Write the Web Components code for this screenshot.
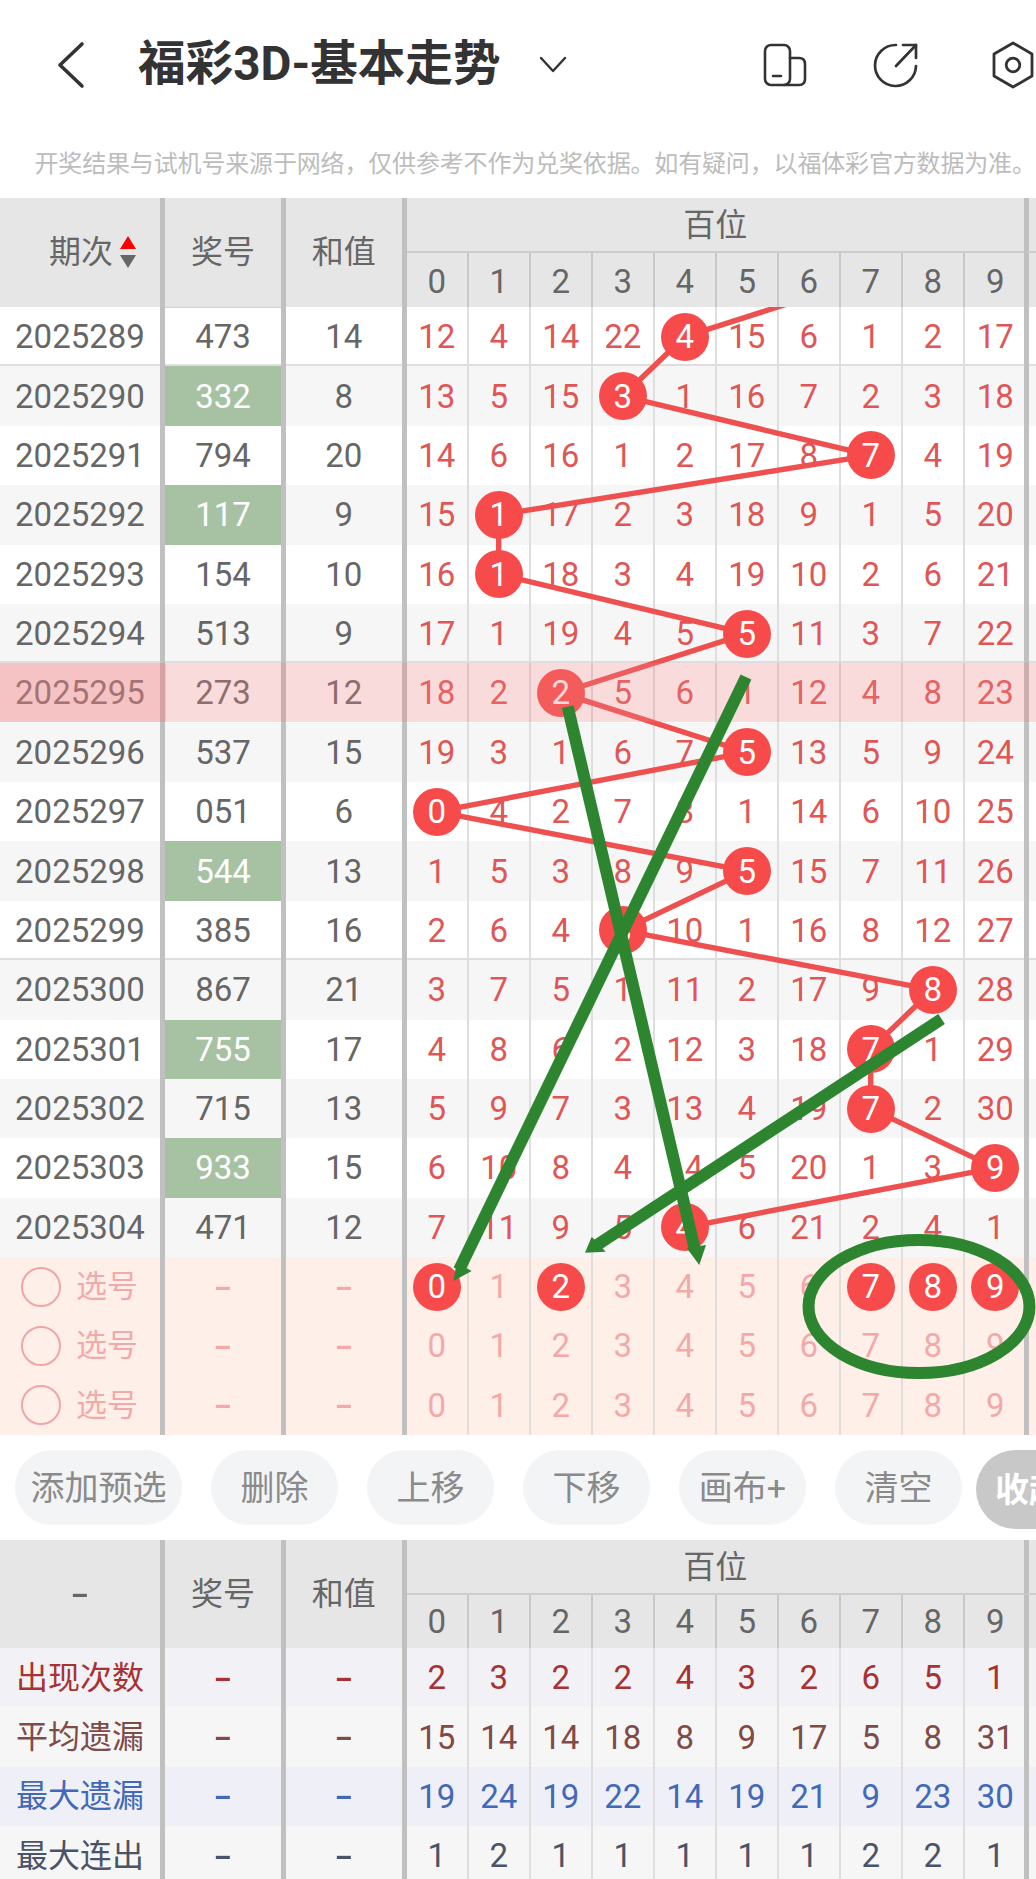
<!DOCTYPE html>
<html lang="zh-CN">
<head>
<meta charset="utf-8">
<title>福彩3D-基本走势</title>
<style>
  html, body { margin: 0; background: #fff; }
  body { width: 1036px; height: 1879px; overflow: hidden; font-family: Roboto, "Noto Sans CJK SC", sans-serif; }
  trend-table, action-bar, stat-table, top-bar, notice-bar { width: 1036px; }
</style>
</head>
<body>
<top-bar title-text="福彩3D-基本走势"></top-bar>
<notice-bar>开奖结果与试机号来源于网络，仅供参考不作为兑奖依据。如有疑问，以福体彩官方数据为准。</notice-bar>
<trend-table></trend-table>
<action-bar>
  <action-pill>添加预选</action-pill>
  <action-pill>删除</action-pill>
  <action-pill>上移</action-pill>
  <action-pill>下移</action-pill>
  <action-pill>画布+</action-pill>
  <action-pill>清空</action-pill>
  <action-pill strong>收起</action-pill>
</action-bar>
<stat-table></stat-table>

<script>
const COLS = "165px 121px 120.7px repeat(9, 62px) 59px 1fr";
const FONT = 'Roboto, "Noto Sans CJK SC", sans-serif';
const ROW_H = 59.375;

// [期次, 奖号, 和值, 命中列, 遗漏]
const DRAWS = [
    ["2025289", "473", "14", 4, [12, 4, 14, 22, 4, 15, 6, 1, 2, 17]],
    ["2025290", "332", "8", 3, [13, 5, 15, 3, 1, 16, 7, 2, 3, 18]],
    ["2025291", "794", "20", 7, [14, 6, 16, 1, 2, 17, 8, 7, 4, 19]],
    ["2025292", "117", "9", 1, [15, 1, 17, 2, 3, 18, 9, 1, 5, 20]],
    ["2025293", "154", "10", 1, [16, 1, 18, 3, 4, 19, 10, 2, 6, 21]],
    ["2025294", "513", "9", 5, [17, 1, 19, 4, 5, 5, 11, 3, 7, 22]],
    ["2025295", "273", "12", 2, [18, 2, 2, 5, 6, 1, 12, 4, 8, 23]],
    ["2025296", "537", "15", 5, [19, 3, 1, 6, 7, 5, 13, 5, 9, 24]],
    ["2025297", "051", "6", 0, [0, 4, 2, 7, 8, 1, 14, 6, 10, 25]],
    ["2025298", "544", "13", 5, [1, 5, 3, 8, 9, 5, 15, 7, 11, 26]],
    ["2025299", "385", "16", 3, [2, 6, 4, 3, 10, 1, 16, 8, 12, 27]],
    ["2025300", "867", "21", 8, [3, 7, 5, 1, 11, 2, 17, 9, 8, 28]],
    ["2025301", "755", "17", 7, [4, 8, 6, 2, 12, 3, 18, 7, 1, 29]],
    ["2025302", "715", "13", 7, [5, 9, 7, 3, 13, 4, 19, 7, 2, 30]],
    ["2025303", "933", "15", 9, [6, 10, 8, 4, 14, 5, 20, 1, 3, 9]],
    ["2025304", "471", "12", 4, [7, 11, 9, 5, 4, 6, 21, 2, 4, 1]],
];
const GROUP_SUM = ["332", "117", "544", "755", "933"];

const STATS = [
    ["出现次数", "#a83232", "#f1f1f6", [2, 3, 2, 2, 4, 3, 2, 6, 5, 1]],
    ["平均遗漏", "#7f4a48", "#f6f6f6", [15, 14, 14, 18, 8, 9, 17, 5, 8, 31]],
    ["最大遗漏", "#4269b8", "#eff0f7", [19, 24, 19, 22, 14, 19, 21, 9, 23, 30]],
    ["最大连出", "#4a5468", "#f6f6f6", [1, 2, 1, 1, 1, 1, 1, 2, 2, 1]],
];

function colCenter(col) {
    return col === 9 ? 995.2 : 436.7 + 62 * col;
}

class TopBar extends HTMLElement {
    constructor() {
        super();
        this.attachShadow({ mode: "open" });
    }

    connectedCallback() {
        this.shadowRoot.innerHTML = `
      <style>
        :host { display: flex; align-items: center; height: 130px; color: #333; overflow: hidden; }
        svg { display: block; flex: none; fill: none; stroke: #333; stroke-linecap: round; stroke-linejoin: round; }
        .back { margin-left: 56px; }
        h1 { margin: 0 0 0 53px; font: 700 47.6px/1 ${FONT}; white-space: nowrap; }
        .arrow { margin-left: 38.7px; }
        .phone { margin-left: 196px; }
        .share { margin-left: 66px; }
        .gear { margin-left: 70px; }
      </style>
      <svg class="back" width="29" height="48" viewBox="0 0 29 48" stroke-width="3.6">
        <path d="M26 3 L4 24 L26 45"/>
      </svg>
      <h1>${this.getAttribute("title-text")}</h1>
      <svg class="arrow" width="28" height="18" viewBox="0 0 28 18" stroke-width="2.4">
        <path d="M2 2 L14 15 L26 2"/>
      </svg>
      <svg class="phone" width="44" height="44" viewBox="0 0 44 44" stroke-width="2.6">
        <rect x="2" y="2" width="25" height="40" rx="6"/>
        <path d="M27 15 H36 Q42 15 42 21 V36 Q42 42 36 42 H21"/>
        <path d="M10 33 H18"/>
      </svg>
      <svg class="share" width="48" height="46" viewBox="0 0 48 46" stroke-width="2.7">
        <path d="M23 3 A20.5 20.5 0 1 0 43 24"/>
        <path d="M23 24 L43 3"/>
        <path d="M30 3 H43 V16"/>
      </svg>
      <svg class="gear" width="44" height="48" viewBox="0 0 44 48" stroke-width="2.8">
        <path d="M22 2 L41 13 V35 L22 46 L3 35 V13 Z"/>
        <circle cx="22" cy="24" r="6.8"/>
      </svg>
    `;
    }
}

class NoticeBar extends HTMLElement {
    constructor() {
        super();
        this.attachShadow({ mode: "open" });
        this.shadowRoot.innerHTML = `
      <style>
        :host { display: flex; align-items: center; height: 68px; padding-left: 34.5px; box-sizing: border-box;
                overflow: hidden; white-space: nowrap; color: #bcbcbc; font: 24px/1 ${FONT}; letter-spacing: -.16px; }
      </style>
      <slot></slot>
    `;
    }
}

// 两张表共用的表头
class TrendHead extends HTMLElement {
    constructor() {
        super();
        this.attachShadow({ mode: "open" });
    }

    connectedCallback() {
        const sort = this.hasAttribute("sortable");
        const lastRow = sort ? 54 : 53;
        let digits = "";
        for (let i = 0; i < 10; i++) {
            digits += `<div class="d${i === 9 ? " last" : ""}" style="grid-row:2;grid-column:${i + 4}">${i}</div>`;
        }
        this.shadowRoot.innerHTML = `
      <style>
        :host { display: grid; grid-template-columns: ${COLS}; grid-template-rows: 55px ${lastRow}px; height: ${55 + lastRow}px;
                background: #e6e6e6; color: #666; font: 32px/1 ${FONT}; }
        div { display: flex; align-items: center; justify-content: center; box-sizing: border-box; }
        .tall { grid-row: 1 / 3; border-right: 5px solid #c0c0c0; padding-bottom: ${sort ? 2 : 0}px; }
        .first { justify-content: flex-start; padding-left: 49px; }
        .blank { justify-content: center; padding-left: 0; }
        .dash { display: inline-block; font-size: 42px; transform: scaleX(1.4); }
        .group { grid-row: 1; grid-column: 4 / 14; border-bottom: 2px solid #cdcdcd; }
        .d { border-right: 2px solid #c8c8c8; font-size: 33px; padding-top: ${sort ? 2 : 0}px; }
        .d.last { border-right: 0; padding-left: 2px; }
        .rest { grid-column: 14; border-left: 5px solid #c0c0c0; }
        .rest.top { grid-row: 1; border-bottom: 2px solid #cdcdcd; }
        .rest.bottom { grid-row: 2; }
        .sort { display: flex; flex-direction: column; gap: 6px; margin-left: 7px; }
        .sort i { display: block; width: 0; height: 0; border-left: 8px solid transparent; border-right: 8px solid transparent; }
        .up { border-bottom: 13px solid #f00; }
        .down { border-top: 13px solid #666; }
      </style>
      <div class="tall first ${sort ? "" : "blank"}">
        ${sort ? `期次<span class="sort"><i class="up"></i><i class="down"></i></span>` : `<span class="dash">-</span>`}
      </div>
      <div class="tall">奖号</div>
      <div class="tall">和值</div>
      <div class="group">百位</div>
      ${digits}
      <div class="rest top"></div>
      <div class="rest bottom"></div>
    `;
    }
}

// 一行数据：前三格 + 十个号码列
class TrendRow extends HTMLElement {
    constructor() {
        super();
        this.attachShadow({ mode: "open" });
    }

    connectedCallback() {
        const r = this.data;
        let cells = "";
        r.values.forEach((v, i) => {
            const hit = r.hits && r.hits.includes(i);
            cells += `<div class="d${i === 9 ? " last" : ""}">${hit ? `<span class="ball">${v}</span>` : v}</div>`;
        });
        this.shadowRoot.innerHTML = `
      <style>
        :host { display: grid; grid-template-columns: ${COLS}; height: ${r.height || ROW_H}px;
                background: ${r.bg}; color: ${r.color}; font: 33px/1 ${FONT};
                ${r.line ? "box-shadow: inset 0 -2px 0 #dedede;" : ""} }
        div { display: flex; align-items: center; justify-content: center; box-sizing: border-box; min-width: 0; }
        .main { border-right: 5px solid #c0c0c0; color: ${r.mainColor || r.color}; }
        .main.cjk { font-size: 32px; }
        .green { background: #a7c2a3; color: #fff; background-clip: padding-box; }
        .topline { box-shadow: inset 0 1px 0 #c9d6c6; }
        .dash { display: inline-block; font-size: 42px; transform: scaleX(1.4); }
        .d { border-right: 2px solid ${r.lineColor || "#dedede"}; color: ${r.digitColor || r.color}; }
        .d.last { border-right: 0; padding-left: 2px; }
        .rest { border-left: 5px solid #c0c0c0; }
        .ball { position: relative; z-index: 2; display: flex; align-items: center; justify-content: center;
                flex: none; width: 48px; height: 48px; border-radius: 50%; background: #f74b4b; color: #fff; font-weight: 400; }
        .pick { justify-content: flex-start; padding-left: 21px; gap: 15px; color: #f4a9a9; font-size: 31px; }
        .radio { width: 40px; height: 40px; box-sizing: border-box; border: 2.5px solid #f2a5a5; border-radius: 50%; }
      </style>
      ${r.head}
      ${cells}
      <div class="rest"></div>
    `;
    }
}

function makeRow(data) {
    const row = document.createElement("trend-row");
    row.data = data;
    return row;
}

class TrendTable extends HTMLElement {
    constructor() {
        super();
        this.attachShadow({ mode: "open" });
    }

    connectedCallback() {
        this.render();
        const body = this.shadowRoot.querySelector(".body");
        DRAWS.forEach((d, i) => {
            const green = GROUP_SUM.includes(d[1]);
            body.appendChild(makeRow({
                bg: i % 2 ? "#f6f6f6" : "#fff",
                color: "#666",
                digitColor: "#e05656",
                line: i % 5 === 0 && i < 15,
                hits: [d[3]],
                values: d[4],
                head: `<div class="main">${d[0]}</div>
                       <div class="main ${green ? "green" : ""} ${i === 0 ? "topline" : ""}">${d[1]}</div>
                       <div class="main">${d[2]}</div>`,
            }));
        });
        for (let p = 0; p < 3; p++) {
            body.appendChild(makeRow({
                bg: "#ffefe9",
                color: "#f4a9a9",
                lineColor: "#e2dcda",
                height: 59.34,
                hits: p === 0 ? [0, 2, 7, 8, 9] : [],
                values: [0, 1, 2, 3, 4, 5, 6, 7, 8, 9],
                head: `<div class="main pick"><span class="radio"></span>选号</div>
                       <div class="main"><span class="dash">-</span></div>
                       <div class="main"><span class="dash">-</span></div>`,
            }));
        }
    }

    render() {
        // 折线：上一期(2025288)从表头下方穿出
        const pts = [[colCenter(7), -ROW_H / 2]];
        DRAWS.forEach((d, i) => pts.push([colCenter(d[3]), ROW_H * (i + 0.5)]));
        const line = pts.map(p => p[0].toFixed(1) + "," + p[1].toFixed(1)).join(" ");

        this.shadowRoot.innerHTML = `
      <style>
        :host { display: block; position: relative; height: 1237px; }
        .body { position: relative; overflow: hidden; }
        .lines { position: absolute; left: 0; top: 0; z-index: 1; }
        .shade { position: absolute; top: ${ROW_H * 6 - 0.5}px; height: ${ROW_H}px; z-index: 3; }
        .shade.left { left: 0; width: 166px; background: rgba(234, 130, 130, .48); }
        .shade.right { left: 166px; right: 0; background: rgba(238, 131, 131, .29); }
        .marks { position: absolute; left: 0; top: 0; z-index: 4; }
      </style>
      <trend-head sortable></trend-head>
      <div class="body">
        <svg class="lines" width="1036" height="950" viewBox="0 0 1036 950">
          <polyline points="${line}" fill="none" stroke="#ee5050" stroke-width="5.4"/>
        </svg>
        <div class="shade left"></div>
        <div class="shade right"></div>
      </div>
      <svg class="marks" width="1036" height="1237" viewBox="0 198 1036 1237" fill="#2e8530">
        <path d="M746 677 L459 1270" stroke="#2e8530" stroke-width="12" fill="none"/>
        <path d="M453.3 1281 L456.7 1263 L471.7 1271 Z"/>
        <path d="M567.7 706.7 L695 1250" stroke="#2e8530" stroke-width="12" fill="none"/>
        <path d="M699.3 1265 L706 1245 L686.7 1248 Z"/>
        <path d="M941.6 1019 L597 1245" stroke="#2e8530" stroke-width="12" fill="none"/>
        <path d="M585 1252.7 L605.7 1251.7 L591.7 1236.7 Z"/>
        <ellipse cx="919" cy="1306.5" rx="110.5" ry="66.5" fill="none" stroke="#2e8530" stroke-width="12"/>
      </svg>
    `;
    }
}

class ActionBar extends HTMLElement {
    constructor() {
        super();
        this.attachShadow({ mode: "open" });
        this.shadowRoot.innerHTML = `
      <style>
        :host { display: flex; align-items: flex-start; gap: 29px; height: 105px; padding: 15px 0 0 15px;
                box-sizing: border-box; overflow: hidden; }
      </style>
      <slot></slot>
    `;
    }
}

class ActionPill extends HTMLElement {
    constructor() {
        super();
        this.attachShadow({ mode: "open" });
        this.shadowRoot.innerHTML = `
      <style>
        :host { display: flex; flex: none; align-items: center; justify-content: center; box-sizing: border-box;
                min-width: 127px; height: 75px; padding: 0 15.5px; border-radius: 37.5px; white-space: nowrap;
                background: #f3f4f6; color: #8a8a8a; font: 34px/1 ${FONT}; }
        :host([strong]) { height: 79px; margin-left: -15px; padding: 0 19px; border-radius: 39.5px; justify-content: flex-start;
                background: #c8c8c8; color: #fff; font-weight: 700; }
      </style>
      <slot></slot>
    `;
    }
}

class StatTable extends HTMLElement {
    constructor() {
        super();
        this.attachShadow({ mode: "open" });
        this.shadowRoot.innerHTML = `
      <style>
        :host { display: block; }
      </style>
      <trend-head></trend-head>
    `;
    }

    connectedCallback() {
        STATS.forEach(s => {
            this.shadowRoot.appendChild(makeRow({
                bg: s[2],
                color: s[1],
                values: s[3],
                head: `<div class="main cjk">${s[0]}</div>
                       <div class="main"><span class="dash">-</span></div>
                       <div class="main"><span class="dash">-</span></div>`,
            }));
        });
    }
}

customElements.define("top-bar", TopBar);
customElements.define("notice-bar", NoticeBar);
customElements.define("trend-head", TrendHead);
customElements.define("trend-row", TrendRow);
customElements.define("trend-table", TrendTable);
customElements.define("action-bar", ActionBar);
customElements.define("action-pill", ActionPill);
customElements.define("stat-table", StatTable);
</script>
</body>
</html>
